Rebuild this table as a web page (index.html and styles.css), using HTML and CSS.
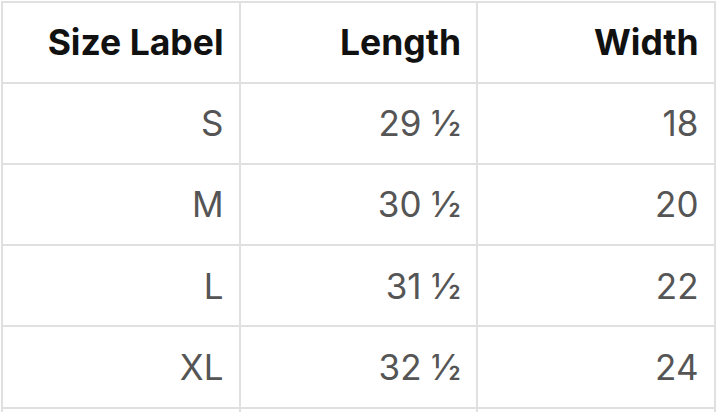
FILE: index.html
```html
<!DOCTYPE html>
<html lang="en">
<head>
<meta charset="utf-8">
<title>Size Chart</title>
<link rel="stylesheet" href="styles.css">
</head>
<body>
<div class="chart">
  <div class="cell head">Size Label</div>
  <div class="cell head">Length</div>
  <div class="cell head">Width</div>
  <div class="cell">S</div>
  <div class="cell">29 ½</div>
  <div class="cell">18</div>
  <div class="cell">M</div>
  <div class="cell">30 ½</div>
  <div class="cell">20</div>
  <div class="cell">L</div>
  <div class="cell">31 ½</div>
  <div class="cell">22</div>
  <div class="cell">XL</div>
  <div class="cell">32 ½</div>
  <div class="cell">24</div>
  <div class="cell"></div>
  <div class="cell"></div>
  <div class="cell"></div>
</div>
</body>
</html>
```
FILE: styles.css
```css
html, body {
  margin: 0;
  padding: 0;
  background: #ffffff;
  overflow: hidden;
}
.chart {
  margin: 1px 0 0 1px;
  display: grid;
  grid-template-columns: repeat(3, 235.5px);
  grid-template-rows: 78.5px repeat(5, 79.3px);
  gap: 2px;
  padding: 2px;
  background: #e0e0e0;
  width: max-content;
  font-family: "Inter", "Liberation Sans", sans-serif;
}
.cell {
  background: #ffffff;
  display: flex;
  align-items: center;
  justify-content: flex-end;
  padding-right: 15px;
  font-size: 35px;
  color: #555555;
}
.head {
  font-weight: 700;
  font-size: 35.5px;
  color: #111111;
}
```
